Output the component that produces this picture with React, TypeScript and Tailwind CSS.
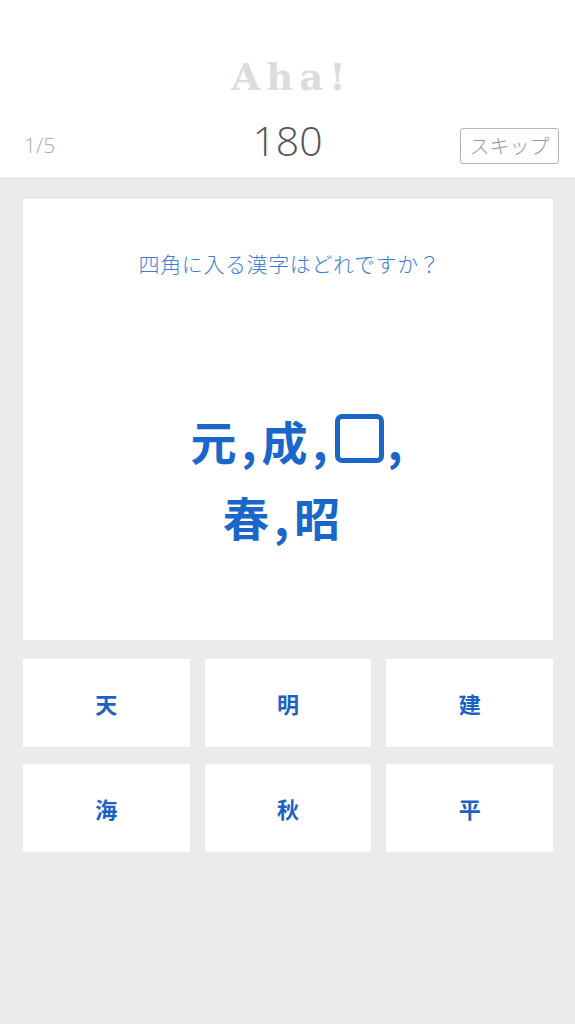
const options = ["天", "明", "建", "海", "秋", "平"];

const jp = { fontFamily: '"Noto Sans CJK JP", "Noto Sans", sans-serif' };

export default function App() {
  return (
    <div className="min-h-[1024px] w-[575px] bg-[#ebebeb]" style={jp}>
      <header className="flex h-[177px] flex-col bg-white">
        <div
          className="mt-[54px] pl-[8px] text-center text-[37px] font-bold leading-[46px] tracking-[6px] text-[#dcdcdc]"
          style={{ fontFamily: '"DejaVu Serif", "Liberation Serif", serif' }}
        >
          Aha!
        </div>
        <div className="relative mt-[23px] flex h-[46px] items-center justify-between pl-[24px] pr-[16px]">
          <span className="text-[21px] font-light text-[#aaaaaa]" style={{ fontFamily: '"Open Sans", sans-serif' }}>
            1/5
          </span>
          <span
            className="absolute left-1/2 top-[-6px] -translate-x-1/2 text-[41px] font-light leading-[46px] text-[#555555]"
            style={{ fontFamily: '"Open Sans", sans-serif' }}
          >
            180
          </span>
          <button className="flex h-[36px] w-[99px] items-center justify-center rounded-[3px] border border-[#b5b5b5] text-[20px] font-light text-[#9a9a9a]">
            スキップ
          </button>
        </div>
      </header>

      <main className="pl-[23px] pr-[22px] pt-[22px]">
        <section className="flex h-[441px] flex-col items-center bg-white">
          <p className="mt-[49px] pl-[3px] text-[21px] font-light tracking-[0.6px] text-[#3c7fd2]">四角に入る漢字はどれですか？</p>
          <div className="mt-[122px] flex flex-col items-center text-[46px] font-bold leading-[77px] tracking-[5px] text-[#1b66c9]">
            <div className="flex items-center pl-[22px]">
              <span>元,成,</span>
              <span className="mx-[3px] mb-[4px] inline-block h-[49px] w-[49px] rounded-[7px] border-[5px] border-[#1b66c9]" />
              <span>,</span>
            </div>
            <div className="-mt-[1px] pr-[8px]">春,昭</div>
          </div>
        </section>

        <div className="mt-[19px] grid grid-cols-3 gap-x-[15px] gap-y-[17px]">
          {options.map((o) => (
            <button
              key={o}
              className="flex h-[88px] items-center justify-center bg-white text-[22px] font-bold text-[#1b62c4]"
            >
              {o}
            </button>
          ))}
        </div>
      </main>
    </div>
  );
}
